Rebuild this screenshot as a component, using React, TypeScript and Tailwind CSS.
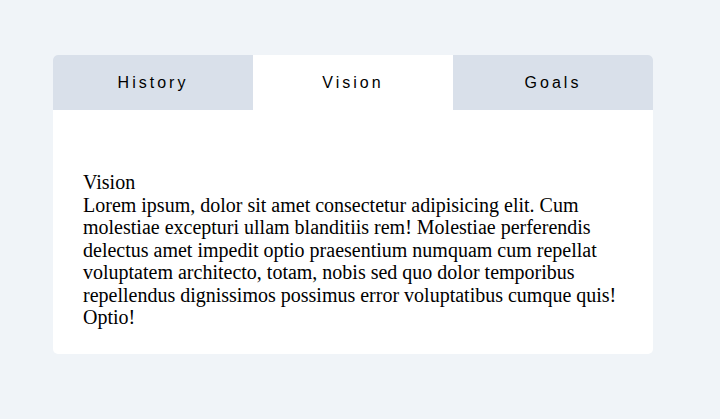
import React, { useState } from 'react';

const tabs = [
  { id: 'history', label: 'History' },
  { id: 'vision', label: 'Vision' },
  { id: 'goals', label: 'Goals' },
];

const body =
  'Lorem ipsum, dolor sit amet consectetur adipisicing elit. Cum molestiae excepturi ullam blanditiis rem! Molestiae perferendis delectus amet impedit optio praesentium numquam cum repellat voluptatem architecto, totam, nobis sed quo dolor temporibus repellendus dignissimos possimus error voluptatibus cumque quis! Optio!';

export default function App() {
  const [active, setActive] = useState('vision');
  const current = tabs.find(t => t.id === active)!;

  return (
    <div className="min-h-[419px] w-full bg-[#f0f4f8] pt-[55px] pl-[53px]">
      <div className="w-[600px] h-[299px] bg-white rounded-[5px] overflow-hidden flex flex-col">
        {/* Tab bar */}
        <div className="flex">
          {tabs.map(tab => (
            <button
              key={tab.id}
              onClick={() => setActive(tab.id)}
              className={`w-[200px] h-[55px] flex items-center justify-center text-[16px] tracking-[3px] text-black font-['Liberation_Sans',sans-serif] ${
                tab.id === active ? 'bg-white' : 'bg-[#d9e0ea]'
              }`}
            >
              {tab.label}
            </button>
          ))}
        </div>

        {/* Panel */}
        <div className="px-[30px] pt-[61px] font-['Liberation_Serif',serif] text-[20px] leading-[22.5px] text-black">
          <div>{current.label}</div>
          <p>{body}</p>
        </div>
      </div>
    </div>
  );
}
